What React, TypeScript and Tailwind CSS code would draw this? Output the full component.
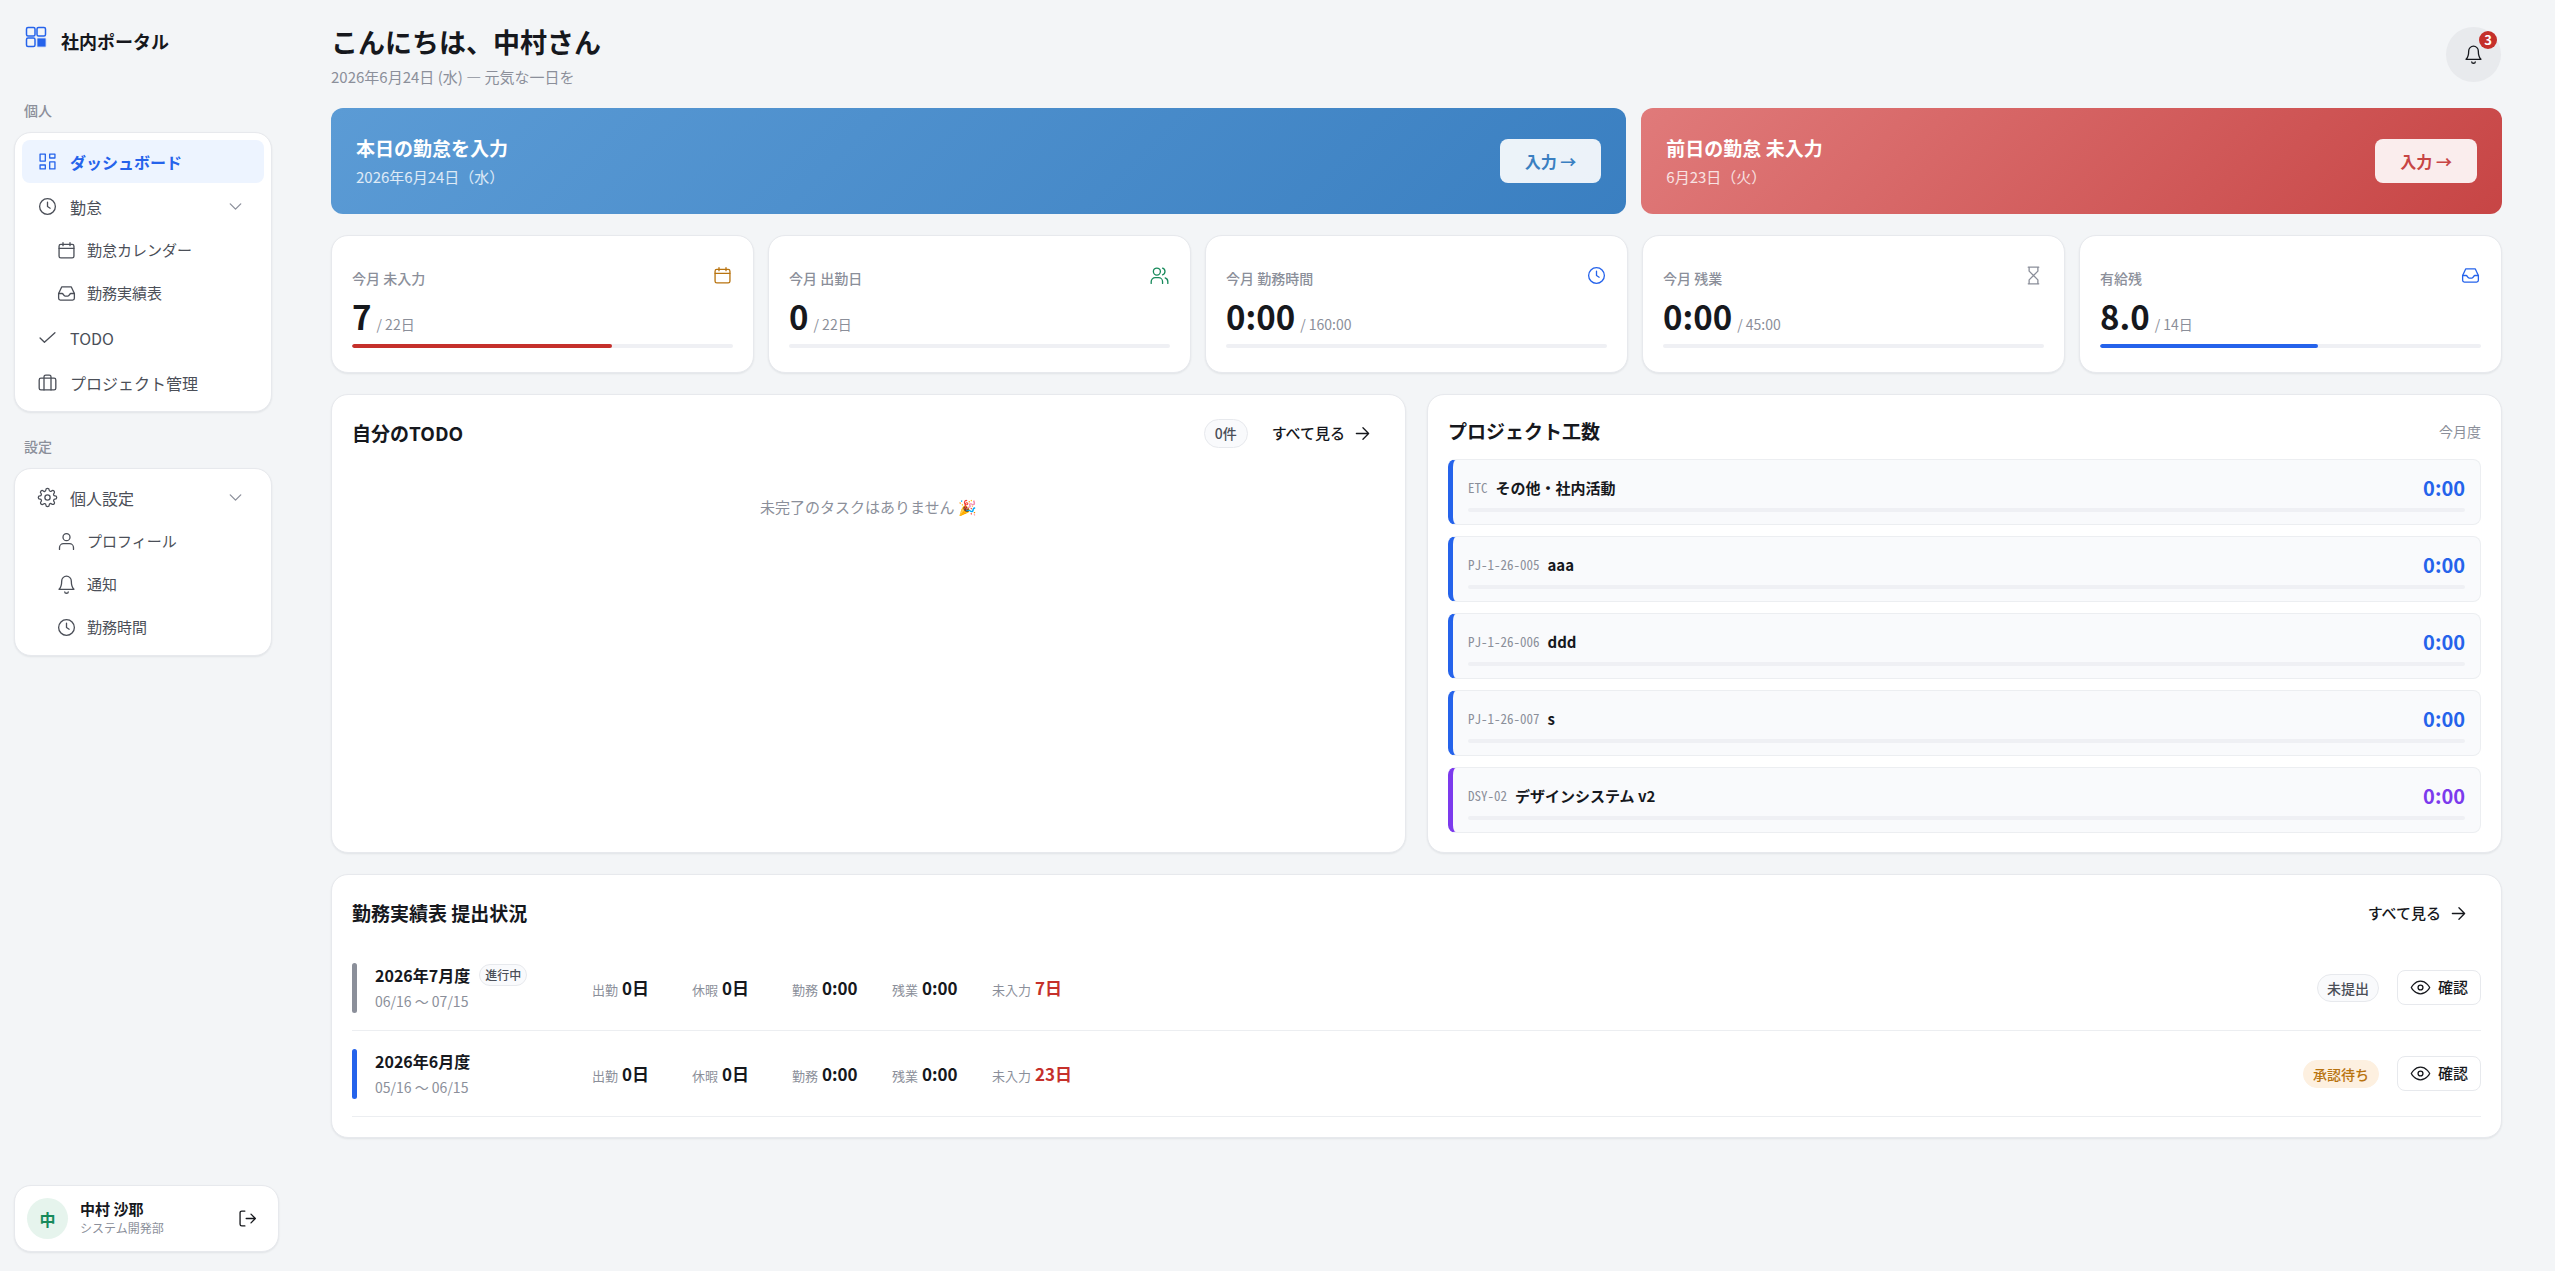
import React from "react";

const ICONS = {
  logo: (
    <>
      <rect x="2.5" y="2.5" width="8.5" height="8.5" rx="1.5" />
      <rect x="13" y="2.5" width="8.5" height="8.5" rx="1.5" />
      <rect x="2.5" y="13" width="8.5" height="8.5" rx="1.5" />
      <rect x="13.5" y="13.5" width="8" height="8" rx="0.5" fill="currentColor" strokeOpacity="0.3" />
    </>
  ),
  dashboard: (
    <>
      <path d="M3.5 3.5h6v8h-6z" />
      <path d="M14.5 3.5h6V8h-6z" />
      <path d="M14.5 12.5h6v8h-6z" />
      <path d="M3.5 16h6v4.5h-6z" />
    </>
  ),
  clock: (
    <>
      <circle cx="12" cy="12" r="9" />
      <path d="M12 7v5l3 2" />
    </>
  ),
  calendar: (
    <>
      <rect x="3.5" y="5" width="17" height="15.5" rx="2" />
      <path d="M3.5 9.5h17M8 3v3.5M16 3v3.5" />
    </>
  ),
  inbox: (
    <>
      <path d="M3 12h4c1.5 0 1.5 3 3.5 3h3c2 0 2-3 3.5-3h4" />
      <path d="M6.5 4.5h11L21 12v5.5a2 2 0 0 1-2 2H5a2 2 0 0 1-2-2V12z" />
    </>
  ),
  check: <path d="m3.5 12.5 5 5L20.500 6.5" />,
  briefcase: (
    <>
      <rect x="2.5" y="7" width="19" height="13.5" rx="2" />
      <path d="M8 20.5v-15a2 2 0 0 1 2-2h4a2 2 0 0 1 2 2v15" />
    </>
  ),
  gear: (
    <>
      <circle cx="12" cy="12" r="3" />
      <path
        transform="translate(0.5 0.5) scale(0.958)"
        d="M19.4 15a1.65 1.65 0 0 0 .33 1.82l.06.06a2 2 0 1 1-2.83 2.83l-.06-.06a1.65 1.65 0 0 0-1.82-.33 1.65 1.65 0 0 0-1 1.51V21a2 2 0 0 1-4 0v-.09A1.65 1.65 0 0 0 9 19.4a1.65 1.65 0 0 0-1.82.33l-.06.06a2 2 0 1 1-2.83-2.83l.06-.06a1.65 1.65 0 0 0 .33-1.82 1.65 1.65 0 0 0-1.51-1H3a2 2 0 0 1 0-4h.09A1.65 1.65 0 0 0 4.6 9a1.65 1.65 0 0 0-.33-1.82l-.06-.06a2 2 0 1 1 2.83-2.83l.06.06a1.65 1.65 0 0 0 1.82.33H9a1.65 1.65 0 0 0 1-1.51V3a2 2 0 0 1 4 0v.09a1.65 1.65 0 0 0 1 1.51 1.65 1.65 0 0 0 1.82-.33l.06-.06a2 2 0 1 1 2.83 2.83l-.06.06a1.65 1.65 0 0 0-.33 1.82V9a1.65 1.65 0 0 0 1.51 1H21a2 2 0 0 1 0 4h-.09a1.65 1.65 0 0 0-1.51 1z"
      />
    </>
  ),
  user: (
    <>
      <circle cx="12" cy="7" r="4" />
      <path d="M4 21v-2a4.5 4.5 0 0 1 4.5-4.5h7A4.5 4.5 0 0 1 20 19v2" />
    </>
  ),
  users: (
    <>
      <circle cx="9" cy="7.5" r="4" />
      <path d="M2.500 21v-2A4.5 4.5 0 0 1 7 14.5h4a4.5 4.5 0 0 1 4.5 4.5v2" />
      <path d="M15.5 3.7a4 4 0 0 1 0 7.600M21.5 21v-2a4.5 4.5 0 0 0-3-4.200" />
    </>
  ),
  bell: (
    <>
      <path d="M12 2.5A5.500 5.500 0 0 0 6.500 8c0 4.500-.5 7-3 9.500h17c-2.500-2.500-3-5-3-9.500A5.500 5.500 0 0 0 12 2.500z" />
      <path d="M10 20.500a2 1.500 0 0 0 4 0" />
    </>
  ),
  hourglass: <path d="M6 2.5h12M6 21.5h12M7 2.5V7l5 5 5-5V2.500M7 21.500V17l5-5 5 5v4.500" />,
  arrow: <path d="M5 12h14M12.5 5.5 19 12l-6.5 6.5" />,
  chevron: <path d="m6 9 6 6 6-6" />,
  eye: (
    <>
      <path d="M1.5 12S5 4.8 12 4.8 22.5 12 22.5 12 19 19.2 12 19.2 1.5 12 1.5 12z" />
      <circle cx="12" cy="12" r="2.8" />
    </>
  ),
  logout: <path d="M9 20.5H5.5a2 2 0 0 1-2-2v-13a2 2 0 0 1 2-2H9M10.5 12H21M16 7l5 5-5 5" />,
};

type IconName = keyof typeof ICONS;

const Icon = ({ name, className = "size-[21px]" }: { name: IconName; className?: string }) => (
  <svg
    viewBox="0 0 24 24"
    fill="none"
    stroke="currentColor"
    strokeWidth="1.5"
    strokeLinecap="round"
    strokeLinejoin="round"
    className={`shrink-0 ${className}`}
    aria-hidden="true"
  >
    {ICONS[name]}
  </svg>
);

const cardClass = "rounded-[17px] border border-[#e7e9ed] bg-white shadow-[0_1px_2px_rgba(16,24,40,0.08)]";

type NavEntry = { label: string; icon: IconName; active?: boolean; sub?: boolean; expandable?: boolean };

const personalNav: NavEntry[] = [
  { label: "ダッシュボード", icon: "dashboard", active: true },
  { label: "勤怠", icon: "clock", expandable: true },
  { label: "勤怠カレンダー", icon: "calendar", sub: true },
  { label: "勤務実績表", icon: "inbox", sub: true },
  { label: "TODO", icon: "check" },
  { label: "プロジェクト管理", icon: "briefcase" },
];

const settingsNav: NavEntry[] = [
  { label: "個人設定", icon: "gear", expandable: true },
  { label: "プロフィール", icon: "user", sub: true },
  { label: "通知", icon: "bell", sub: true },
  { label: "勤務時間", icon: "clock", sub: true },
];

const NavItem = ({ item }: { item: NavEntry }) => {
  if (item.expandable) {
    return (
      <button
        type="button"
        aria-expanded="true"
        className="flex h-[43px] w-full items-center gap-3 rounded-lg pr-[18px] pl-[15px] text-left text-base text-[#4b4f58]"
      >
        <Icon name={item.icon} />
        <span className="flex-1">{item.label}</span>
        <Icon name="chevron" className="size-[21px] text-[#8b8f9a]" />
      </button>
    );
  }
  if (item.sub) {
    return (
      <a href="#" className="flex h-[41px] items-center gap-[10px] rounded-lg pl-[34px] text-[15px] text-[#4b4f58]">
        <Icon name={item.icon} />
        {item.label}
      </a>
    );
  }
  return (
    <a
      href="#"
      className={`flex h-[43px] items-center gap-3 rounded-lg px-[15px] text-base ${
        item.active ? "bg-[#edf4ff] font-bold text-[#2563eb]" : "text-[#4b4f58]"
      }`}
    >
      <Icon name={item.icon} />
      {item.label}
    </a>
  );
};

const NavGroup = ({ title, items }: { title: string; items: NavEntry[] }) => (
  <section>
    <h2 className="px-[10px] pb-[11px] text-sm leading-[21px] font-medium text-[#8b8f9a]">{title}</h2>
    <div className={`flex flex-col gap-[2px] p-[7px] ${cardClass}`}>
      {items.map((item) => (
        <NavItem key={item.label} item={item} />
      ))}
    </div>
  </section>
);

const Sidebar = () => (
  <aside className="sticky top-0 flex h-screen w-[279px] shrink-0 flex-col pb-[19px] pl-[14px]">
    <div className="flex items-start gap-[13px] pt-[25px] pl-[10px]">
      <Icon name="logo" className="size-6 text-[#2563eb]" />
      <span className="pt-[2px] text-lg leading-7 font-bold">社内ポータル</span>
    </div>
    <nav className="flex flex-1 flex-col gap-6 pt-[45px] pr-[7px]">
      <NavGroup title="個人" items={personalNav} />
      <NavGroup title="設定" items={settingsNav} />
    </nav>
    <div className={`flex items-center gap-3 px-3 py-3 ${cardClass}`}>
      <span className="flex size-[41px] items-center justify-center rounded-full bg-[#e6f4ed] text-base font-bold text-[#178a5b]">
        中
      </span>
      <div className="flex-1 pb-[2px]">
        <p className="text-[15px] leading-5 font-bold">中村 沙耶</p>
        <p className="text-xs leading-[18px] text-[#8b8f9a]">システム開発部</p>
      </div>
      <button type="button" aria-label="ログアウト" className="px-2">
        <Icon name="logout" />
      </button>
    </div>
  </aside>
);

const Header = () => (
  <header className="flex items-center justify-between">
    <div>
      <h1 className="text-[27px] leading-[42px] font-bold">こんにちは、中村さん</h1>
      <p className="pt-1 text-[15px] leading-5 text-[#8b8f9a]">2026年6月24日 (水) — 元気な一日を</p>
    </div>
    <button
      type="button"
      aria-label="通知 3件"
      className="relative mr-px flex size-[55px] items-center justify-center rounded-full bg-[#e8eaed]"
    >
      <Icon name="bell" />
      <span className="absolute top-1 right-1 flex size-[18px] items-center justify-center rounded-full bg-[#c5302b] text-[13px] font-bold text-white">
        3
      </span>
    </button>
  </header>
);

const banners = [
  {
    title: "本日の勤怠を入力",
    date: "2026年6月24日（水）",
    bg: "bg-[linear-gradient(135deg,#5b9bd5,#3a7fc1)]",
    accent: "text-[#3a7fc1]",
  },
  {
    title: "前日の勤怠 未入力",
    date: "6月23日（火）",
    bg: "bg-[linear-gradient(135deg,#e07a7a,#c74545)]",
    accent: "text-[#c74545]",
  },
];

const Banners = () => (
  <div className="grid grid-cols-[301fr_200fr] gap-[15px]">
    {banners.map((banner) => (
      <section key={banner.title} className={`flex h-[106px] items-center justify-between rounded-xl px-[25px] ${banner.bg}`}>
        <div className="text-white">
          <h2 className="text-[19px] leading-8 font-bold">{banner.title}</h2>
          <p className="text-[15px] leading-[26px] text-white/80">{banner.date}</p>
        </div>
        <button type="button" className={`h-11 rounded-lg bg-white/90 px-[25px] text-base font-bold ${banner.accent}`}>
          入力 →
        </button>
      </section>
    ))}
  </div>
);

const stats: { label: string; value: string; total: string; icon: IconName; iconColor: string; bar: string; percent: number }[] = [
  { label: "今月 未入力", value: "7", total: "/ 22日", icon: "calendar", iconColor: "text-[#b8730f]", bar: "bg-[#c5302b]", percent: 68.2 },
  { label: "今月 出勤日", value: "0", total: "/ 22日", icon: "users", iconColor: "text-[#178a5b]", bar: "bg-[#178a5b]", percent: 0 },
  { label: "今月 勤務時間", value: "0:00", total: "/ 160:00", icon: "clock", iconColor: "text-[#2563eb]", bar: "bg-[#2563eb]", percent: 0 },
  { label: "今月 残業", value: "0:00", total: "/ 45:00", icon: "hourglass", iconColor: "text-[#8b8f9a]", bar: "bg-[#8b8f9a]", percent: 0 },
  { label: "有給残", value: "8.0", total: "/ 14日", icon: "inbox", iconColor: "text-[#2563eb]", bar: "bg-[#2563eb]", percent: 57.1 },
];

const Stats = () => (
  <div className="grid grid-cols-5 gap-[14px]">
    {stats.map((stat) => (
      <section key={stat.label} className={`px-5 pt-[29px] pb-6 ${cardClass}`}>
        <div className="flex h-6 justify-between">
          <h2 className="self-end text-sm leading-[21px] font-medium text-[#8b8f9a]">{stat.label}</h2>
          <Icon name={stat.icon} className={`size-[21px] ${stat.iconColor}`} />
        </div>
        <p className="flex items-baseline gap-[5px] pt-[7px]">
          <span className="text-[33px] leading-10 font-bold">{stat.value}</span>
          <span className="text-sm text-[#8b8f9a]">{stat.total}</span>
        </p>
        <div className="mt-2 h-1 overflow-hidden rounded-full bg-[#eff0f4]">
          <div className={`h-full rounded-full ${stat.bar}`} style={{ width: `${stat.percent}%` }} />
        </div>
      </section>
    ))}
  </div>
);

const SeeAll = () => (
  <a href="#" className="flex h-9 items-center gap-[7px] px-3 text-[15px] font-medium">
    すべて見る
    <Icon name="arrow" />
  </a>
);

const TodoCard = () => (
  <section className={`p-5 ${cardClass}`}>
    <div className="flex items-center">
      <h2 className="flex-1 text-[19px] font-bold">自分のTODO</h2>
      <span className="mr-3 rounded-full border border-[#e7e9ed] bg-[#f9fafc] px-[10px] text-sm leading-[27px] font-medium text-[#4b4f58]">
        0件
      </span>
      <SeeAll />
    </div>
    <p className="pt-11 text-center text-[15px] leading-6 text-[#8b8f9a]">未完了のタスクはありません 🎉</p>
  </section>
);

const projects = [
  { code: "ETC", name: "その他・社内活動", border: "border-l-[#2563eb]", color: "text-[#2563eb]" },
  { code: "PJ-1-26-005", name: "aaa", border: "border-l-[#2563eb]", color: "text-[#2563eb]" },
  { code: "PJ-1-26-006", name: "ddd", border: "border-l-[#2563eb]", color: "text-[#2563eb]" },
  { code: "PJ-1-26-007", name: "s", border: "border-l-[#2563eb]", color: "text-[#2563eb]" },
  { code: "DSY-02", name: "デザインシステム v2", border: "border-l-[#7c3aed]", color: "text-[#7c3aed]" },
];

const ProjectCard = () => (
  <section className={`px-5 pt-5 pb-[19px] ${cardClass}`}>
    <div className="flex items-center justify-between pb-3">
      <h2 className="text-[19px] leading-8 font-bold">プロジェクト工数</h2>
      <span className="text-sm text-[#8b8f9a]">今月度</span>
    </div>
    <ul className="flex flex-col gap-[11px]">
      {projects.map((project) => (
        <li
          key={project.code}
          className={`h-[66px] rounded-lg border border-l-[5px] border-[#eceef1] bg-[#f9fafc] px-[15px] pt-[14px] ${project.border}`}
        >
          <div className="flex h-7 items-center">
            <span className="mr-2 font-['Noto_Sans_Mono_CJK_JP','Noto_Sans_CJK_JP',monospace] text-[13px] text-[#8b8f9a]">
              {project.code}
            </span>
            <span className="flex-1 text-[15px] font-bold">{project.name}</span>
            <span className={`text-xl leading-7 font-bold ${project.color}`}>0:00</span>
          </div>
          <div className="mt-[6px] h-1 rounded-full bg-[#eff0f4]" />
        </li>
      ))}
    </ul>
  </section>
);

const reports = [
  {
    month: "2026年7月度",
    period: "06/16 〜 07/15",
    current: true,
    bar: "bg-[#8b8f9a]",
    missing: "7日",
    status: "未提出",
    statusClass: "border-[#e7e9ed] bg-[#f9fafc] text-[#4b4f58]",
  },
  {
    month: "2026年6月度",
    period: "05/16 〜 06/15",
    current: false,
    bar: "bg-[#2563eb]",
    missing: "23日",
    status: "承認待ち",
    statusClass: "border-[#fdf0e0] bg-[#fdf0e0] text-[#b8730f]",
  },
];

const ReportStat = ({ label, value, alert }: { label: string; value: string; alert?: boolean }) => (
  <div className="flex items-baseline gap-1">
    <dt className="text-[13px] text-[#8b8f9a]">{label}</dt>
    <dd className={`text-[17px] font-bold ${alert ? "text-[#c5302b]" : ""}`}>{value}</dd>
  </div>
);

const ReportCard = () => (
  <section className={`p-5 ${cardClass}`}>
    <div className="flex items-center justify-between pb-[14px]">
      <h2 className="text-[19px] font-bold">勤務実績表 提出状況</h2>
      <SeeAll />
    </div>
    <ul>
      {reports.map((report) => (
        <li key={report.month} className="flex h-[86px] items-center border-b border-[#eceef1]">
          <span className={`h-[50px] w-[5px] rounded-full ${report.bar}`} />
          <div className="ml-[18px] w-[217px]">
            <p className="flex items-center gap-[9px] text-base leading-[26px] font-bold">
              {report.month}
              {report.current && (
                <span className="rounded-full border border-[#e7e9ed] bg-[#f9fafc] px-[5px] text-xs leading-5 font-medium text-[#4b4f58]">
                  進行中
                </span>
              )}
            </p>
            <p className="text-sm leading-[26px] text-[#8b8f9a]">{report.period}</p>
          </div>
          <dl className="grid flex-1 grid-cols-[repeat(5,100px)]">
            <ReportStat label="出勤" value="0日" />
            <ReportStat label="休暇" value="0日" />
            <ReportStat label="勤務" value="0:00" />
            <ReportStat label="残業" value="0:00" />
            <ReportStat label="未入力" value={report.missing} alert />
          </dl>
          <span className={`rounded-full border px-[9px] text-sm leading-[26px] font-medium ${report.statusClass}`}>
            {report.status}
          </span>
          <button
            type="button"
            className="ml-[18px] flex h-[35px] items-center gap-[7px] rounded-lg border border-[#e7e9ed] bg-white px-3 text-[15px] font-medium"
          >
            <Icon name="eye" />
            確認
          </button>
        </li>
      ))}
    </ul>
  </section>
);

const App = () => (
  <div
    lang="ja"
    className="flex min-h-screen bg-[#f3f5f7] font-['Noto_Sans_CJK_JP',sans-serif] text-[#16181d]"
  >
    <Sidebar />
    <main className="flex min-w-0 flex-1 flex-col gap-[21px] pt-[21px] pr-[53px] pb-10 pl-[52px]">
      <Header />
      <Banners />
      <Stats />
      <div className="grid grid-cols-2 gap-[21px]">
        <TodoCard />
        <ProjectCard />
      </div>
      <ReportCard />
    </main>
  </div>
);

export default App;
